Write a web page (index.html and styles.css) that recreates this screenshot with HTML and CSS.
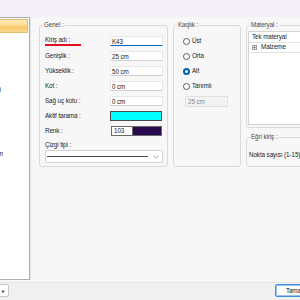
FILE: index.html
```html
<!DOCTYPE html>
<html lang="tr">
<head>
  <meta charset="UTF-8">
  <title>Kiriş</title>
  <link rel="stylesheet" href="styles.css">
</head>
<body>
<div class="dialog">
  <div class="title-bar"></div>

  <div class="dialog-body">
    <nav class="nav">
      <div class="nav-item active">Genel</div>
      <div class="nav-item">Kesit</div>
      <div class="nav-item">Donatı</div>
      <div class="nav-item">Etiket</div>
      <div class="nav-item">Yük bilgileri</div>
      <div class="nav-item">Pas payı</div>
      <div class="nav-item">Sehim</div>
      <div class="nav-item">Çizim</div>
      <div class="nav-item">Alt görünüm</div>
    </nav>

    <div class="pages">
      <div class="page-row">

        <fieldset class="group group-genel">
          <legend>Genel :</legend>
          <div class="group-body">
            <div class="form-grid">
              <label class="req">Kiriş adı :</label>
              <input class="field focused" value="K43">
              <label>Genişlik :</label>
              <input class="field" value="25 cm">
              <label>Yükseklik :</label>
              <input class="field" value="50 cm">
              <label>Kot :</label>
              <input class="field" value="0 cm">
              <label>Sağ uç kotu :</label>
              <input class="field" value="0 cm">
              <label>Aktif tarama :</label>
              <div class="swatch"></div>
              <label>Renk :</label>
              <div class="color-field">
                <span class="color-code">103</span>
                <span class="color-fill"></span>
              </div>
            </div>
            <div class="line-type">
              <div class="line-label">Çizgi tipi :</div>
              <div class="select">
                <span class="line-sample"></span>
                <svg class="chevron" width="6" height="4" viewBox="0 0 6 4">
                  <polyline points="0.5,0.8 3,3.2 5.5,0.8" fill="none" stroke="#8a8a8a" stroke-width="0.8"/>
                </svg>
              </div>
            </div>
          </div>
        </fieldset>

        <fieldset class="group group-offset">
          <legend>Kaqlık :</legend>
          <div class="group-body">
            <label class="radio"><input type="radio" name="offset"> Üst</label>
            <label class="radio"><input type="radio" name="offset"> Orta</label>
            <label class="radio"><input type="radio" name="offset" checked> Alt</label>
            <label class="radio"><input type="radio" name="offset"> Tanımlı</label>
            <input class="field field-disabled" value="25 cm" disabled>
          </div>
        </fieldset>

        <div class="side">
          <fieldset class="group group-material">
            <legend>Materyal :</legend>
            <div class="group-body">
              <div class="tree">
                <div class="tree-row">Tek materyal</div>
                <div class="tree-row">
                  <svg class="expander" width="5" height="5" viewBox="0 0 5 5">
                    <rect x="0.5" y="0.5" width="4" height="4" fill="#fff" stroke="#a0a0a0"/>
                    <path d="M1.3 2.5h2.4M2.5 1.3v2.4" stroke="#555" stroke-width="0.7"/>
                  </svg>
                  Malzeme
                </div>
              </div>
            </div>
          </fieldset>

          <fieldset class="group group-curve">
            <legend>Eğri kiriş :</legend>
            <div class="group-body">Nokta sayısı (1-15)</div>
          </fieldset>
        </div>

      </div>
    </div>
  </div>

  <footer class="footer">
    <button class="btn btn-nav">▸</button>
    <button class="btn btn-ok">Tamam</button>
    <button class="btn">İptal</button>
  </footer>
</div>
</body>
</html>
```

FILE: styles.css
```css
html, body {
  margin: 0;
  height: 100%;
  overflow: hidden;
  background: #f7f7f7;
}

body {
  font-family: "Liberation Sans", Arial, sans-serif;
  font-size: 6.3px;
  letter-spacing: -0.1px;
  color: #222;
}

.dialog {
  width: 420px;
  margin-left: -36px;
}

.title-bar {
  height: 17px;
  background: #f3f0f7;
}

.dialog-body {
  display: flex;
  height: 265px;
  box-sizing: border-box;
  padding-bottom: 2px;
}

/* liste (sol) */
.nav {
  width: 66px;
  box-sizing: border-box;
  padding: 1px;
  background: #fff;
  border: 1px solid #adadad;
  box-shadow: 1px 0 0 #e4e4e4;
}

.nav-item {
  height: 14px;
  line-height: 12px;
  margin-bottom: 2px;
  padding-left: 3px;
  box-sizing: border-box;
  border: 1px solid transparent;
  white-space: nowrap;
  overflow: hidden;
}

.nav-item.active {
  border-color: #e3be6a;
  background: linear-gradient(#fdebbd 0%, #fcdb91 45%, #f9c765 55%, #fbd890 100%);
}

.pages {
  flex: 1;
  padding: 4px 9px 0 9px;
}

.page-row {
  display: flex;
  gap: 5px;
}

/* gruplar */
.group {
  margin: 0;
  padding: 0;
  min-width: 0;
  border: 1px solid #dadada;
  border-radius: 3px;
  box-sizing: border-box;
}

.group legend {
  margin-left: 3px;
  padding: 0 1px;
  line-height: 8px;
  color: #4a4a4a;
}

.group-genel {
  width: 129px;
}

.group-genel .group-body {
  padding: 7px 4px 3px 5px;
}

.form-grid {
  display: grid;
  grid-template-columns: 65px 53px;
  grid-auto-rows: 10px;
  row-gap: 5px;
  align-items: center;
}

.form-grid label {
  line-height: 8px;
}

.form-grid .req {
  justify-self: start;
  width: 36px;
  border-bottom: 2px solid #e3101e;
}

.field {
  width: 53px;
  height: 10px;
  box-sizing: border-box;
  margin: 0;
  padding: 0 1px;
  border: 1px solid #e8e8e8;
  border-bottom-color: #cfcfcf;
  border-radius: 1px;
  background: #fff;
  font: inherit;
  letter-spacing: inherit;
  color: #222;
  outline: none;
}

.field.focused {
  border-bottom-color: #0067c0;
}

.swatch {
  width: 52px;
  height: 10px;
  box-sizing: border-box;
  background: #00ffff;
  border: 1px solid #4a4a4a;
}

.color-field {
  display: flex;
  width: 51px;
  height: 10px;
  margin-left: 1px;
  box-sizing: border-box;
  border: 1px solid #6a6a6a;
}

.color-code {
  width: 18px;
  padding-left: 2px;
  line-height: 8px;
  background: #fff;
  border-right: 1px solid #6a6a6a;
}

.color-fill {
  flex: 1;
  background: #2a0a4e;
}

.line-type {
  margin-top: 5px;
}

.line-label {
  line-height: 8px;
  margin-bottom: 1px;
}

.select {
  display: flex;
  align-items: center;
  gap: 5px;
  height: 13px;
  box-sizing: border-box;
  padding: 0 3px 0 1px;
  background: #fff;
  border: 1px solid #d2d2d2;
  border-radius: 2px;
}

.line-sample {
  flex: 1;
  height: 1px;
  background: #4a4a4a;
}

/* kaçıklık */
.group-offset {
  width: 68px;
}

.group-offset .group-body {
  display: flex;
  flex-direction: column;
  gap: 5px;
  padding: 7px 0 0 9px;
}

.radio {
  display: flex;
  align-items: center;
  height: 10px;
  line-height: 8px;
}

.radio input {
  appearance: none;
  width: 7px;
  height: 7px;
  margin: 0 2px 0 0;
  box-sizing: border-box;
  border: 1px solid #5c5c5c;
  border-radius: 50%;
  background: #fff;
}

.radio input:checked {
  border: 2px solid #0063b1;
}

.field-disabled {
  width: 43px;
  height: 11px;
  margin-left: 2px;
  padding-left: 2px;
  background: #f2f2f2;
  border-color: #e0e0e0;
  color: #8c8c8c;
}

/* sağ sütun */
.side {
  flex: 1;
  display: flex;
  flex-direction: column;
  gap: 5px;
  min-width: 0;
}

.group-material {
  flex: 1;
}

.group-material .group-body {
  padding: 2px 1px 1px 1px;
}

.tree {
  height: 94px;
  box-sizing: border-box;
  background: #fff;
  border: 1px solid #d4d4d4;
}

.tree-row {
  display: flex;
  align-items: flex-end;
  gap: 4px;
  height: 11px;
  box-sizing: border-box;
  padding: 0 0 1px 3px;
  line-height: 8px;
  border-bottom: 1px solid #e2e2e2;
}

.tree-row + .tree-row {
  height: 10px;
}

.expander {
  margin-bottom: 1px;
}

.group-curve .group-body {
  padding: 10px 0 7px 2px;
  line-height: 8px;
  white-space: nowrap;
}

/* alt çubuk */
.footer {
  display: flex;
  gap: 4px;
  height: 18px;
  padding: 1px 21px 0 25px;
  background: #f0f0f0;
  border-top: 1px solid #e6e6e6;
}

.btn {
  width: 42px;
  height: 13px;
  padding: 0;
  font: inherit;
  letter-spacing: inherit;
  color: #222;
  background: #fdfdfd;
  border: 1px solid #c6c6c6;
  border-radius: 2px;
}

.btn-nav {
  width: 20px;
  text-align: right;
  padding-right: 3px;
  color: #555;
}

.btn-ok {
  margin-left: auto;
  border-color: #3d8ee0;
  box-shadow: inset 0 0 0 1px #9cc6f0;
}
```
